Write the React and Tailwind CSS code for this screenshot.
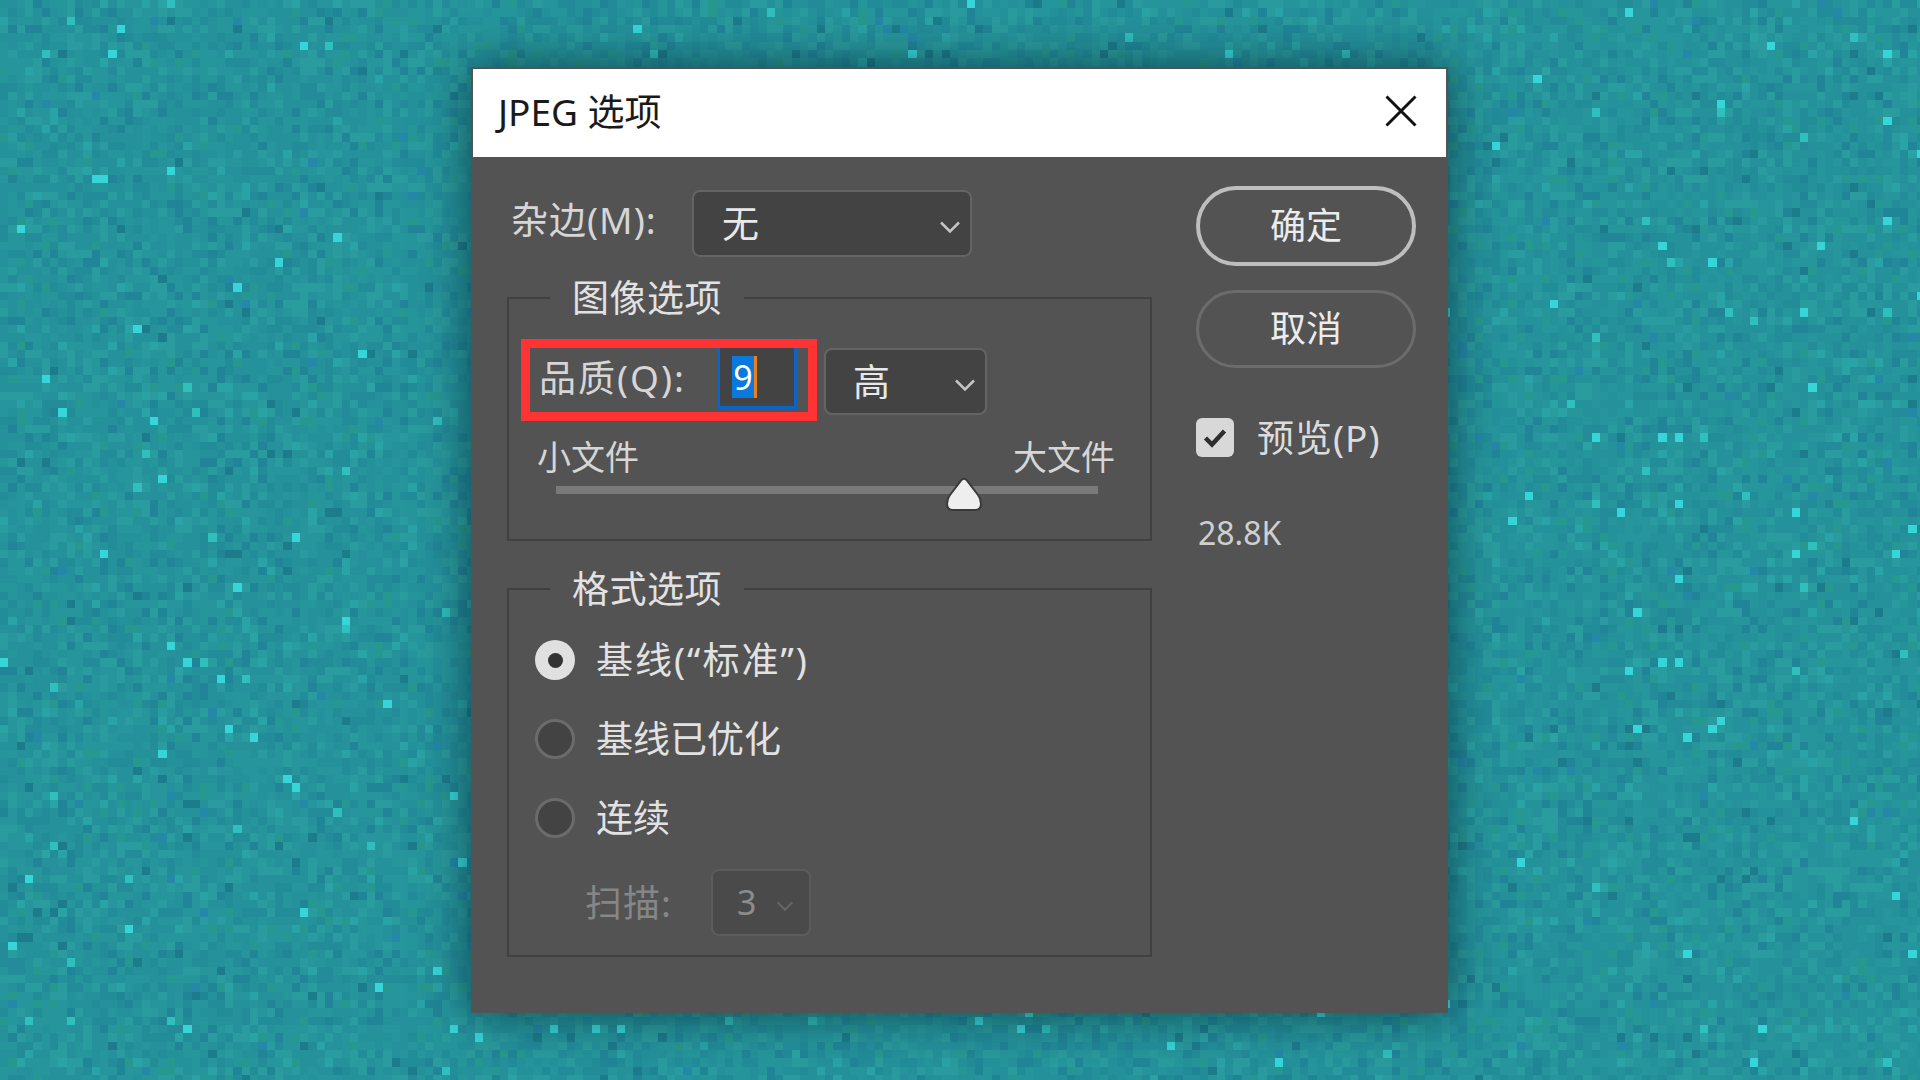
import React from "react";

const font = { fontFamily: '"Noto Sans", "Noto Sans CJK SC", sans-serif' };

// seeded noise so the mosaic stays the same between renders
function buildMosaic() {
  const palette = [
    ["#24919b", 30],
    ["#26969c", 26],
    ["#2a9b9e", 14],
    ["#228c99", 15],
    ["#208697", 6],
    ["#27988f", 3.5],
    ["#2aa3a6", 2.5],
    ["#1c7c8c", 1.2],
    ["#2488a8", 0.5],
    ["#2fbfbc", 0.35],
    ["#36d6d8", 0.55],
  ];
  const total = palette.reduce((s, p) => s + p[1], 0);
  const paths = palette.map(() => "");
  let seed = 12345;
  const rnd = () => {
    seed = (seed * 1664525 + 1013904223) >>> 0;
    return seed / 4294967296;
  };
  for (let y = 0; y < 130; y++) {
    for (let x = 0; x < 231; x++) {
      let r = rnd() * total;
      let i = 0;
      while (r > palette[i][1]) {
        r -= palette[i][1];
        i++;
      }
      paths[i] += `M${x} ${y}h1v1h-1z`;
    }
  }
  return palette.map((p, i) => ({ color: p[0], d: paths[i] }));
}

const mosaic = buildMosaic();

function Chevron({ color = "#c4c4c4", className = "" }) {
  return (
    <svg width="22" height="14" viewBox="0 0 22 14" className={className}>
      <path d="M2 2.5 L11 11.5 L20 2.5" fill="none" stroke={color} strokeWidth="2.5" />
    </svg>
  );
}

function Radio({ checked, label, wide }) {
  return (
    <div className="flex items-center h-[40px] gap-[21px]">
      {checked ? (
        <div className="w-[40px] h-[40px] rounded-full bg-[#e0e0e0] flex items-center justify-center">
          <div className="w-[15px] h-[15px] rounded-full bg-[#333333]" />
        </div>
      ) : (
        <div className="w-[40px] h-[40px] rounded-full bg-[#434343] border-[3px] border-[#6b6b6b]" />
      )}
      <span className={wide ? "text-[37px] leading-[44px] text-[#e2e2e2] whitespace-nowrap tracking-[2px]" : "text-[37px] leading-[44px] text-[#e2e2e2] whitespace-nowrap"}>
        {label}
      </span>
    </div>
  );
}

export default function App() {
  return (
    <div className="relative w-full h-[1080px] overflow-hidden flex items-center justify-center pr-[1px]" style={font}>
      <svg
        className="absolute inset-0 w-[1920px] h-[1080px]"
        viewBox="0 0 230.4 129.6"
        shapeRendering="crispEdges"
      >
        {mosaic.map((m) => (
          <path key={m.color} d={m.d} fill={m.color} />
        ))}
      </svg>

      <div className="relative w-[977px] h-[946px] bg-[#535353] p-[2px] shadow-[0_0_45px_rgba(0,20,30,0.6)]">
        <div className="h-[88px] bg-white flex items-center justify-between pl-[25px] pr-[29px]">
          <span className="text-[37px] text-[#1a1a1a] whitespace-nowrap mb-[3px]">JPEG 选项</span>
          <svg width="32" height="32" viewBox="0 0 32 32" className="mb-[5px]">
            <path d="M1.5 1.5 L30.5 30.5 M30.5 1.5 L1.5 30.5" stroke="#111" strokeWidth="3" />
          </svg>
        </div>

        <div className="flex items-start pl-[34px]">
          {/* left column */}
          <div className="w-[645px] pt-[33px] text-[#d6d6d6]">
            <div className="flex items-center h-[67px]">
              <span className="w-[185px] pl-[4px] mb-[7px] text-[37px] tracking-[1px] whitespace-nowrap">杂边(M):</span>
              <div className="w-[280px] h-[67px] rounded-lg bg-[#434343] border-2 border-[#646464] flex items-center justify-between pl-[28px] pr-[9px]">
                <span className="text-[37px] text-[#e8e8e8]">无</span>
                <Chevron className="mt-[6px]" />
              </div>
            </div>

            <fieldset className="mt-[19px] h-[265px] border-2 border-[#404040]">
              <legend className="ml-[41px] px-[22px] h-[44px] text-[37px] leading-[44px] text-[#e2e2e2] tracking-[0.5px]">图像选项</legend>
              <div className="flex items-start ml-[12px] mt-[19px]">
                <div className="w-[296px] h-[82px] border-[9px] border-[#ff3333] flex items-start pl-[9px] pr-[11px]">
                  <span className="text-[37px] tracking-[2px] leading-[60px] whitespace-nowrap">品质(Q):</span>
                  <div className="ml-auto w-[80px] h-[61px] bg-[#434343] border-x-[3px] border-b-[3px] border-[#0b64c8] pl-[12px] pt-[8px] flex items-start">
                    <span className="h-[42px] w-[22px] bg-[#0a78dc] text-white text-[34px] leading-[42px] text-center">9</span>
                    <span className="h-[42px] w-[3px] bg-[#e8801c]" />
                  </div>
                </div>
                <div className="ml-[7px] mt-[9px] w-[163px] h-[67px] rounded-lg bg-[#434343] border-2 border-[#646464] flex items-center justify-between pl-[27px] pr-[9px]">
                  <span className="text-[37px] text-[#e8e8e8]">高</span>
                  <Chevron className="mt-[6px]" />
                </div>
              </div>
              <div className="flex justify-between ml-[28px] w-[578px] mt-[14px] text-[34px] leading-[44px]">
                <span>小文件</span>
                <span>大文件</span>
              </div>
              <div className="relative ml-[47px] w-[542px] h-[8px] mt-[7px] bg-[#7a7a7a]">
                <svg className="absolute left-[390px] top-[-9px]" width="36" height="36" viewBox="0 0 36 36">
                  <path
                    d="M15.5 3 Q18 0.5 20.5 3 L32 18 Q35 22 35 27 Q35 33 29 33 L7 33 Q1 33 1 27 Q1 22 4 18 Z"
                    fill="#eeeeee"
                    stroke="#3a3a3a"
                    strokeWidth="2"
                  />
                </svg>
              </div>
            </fieldset>

            <fieldset className="mt-[26px] h-[390px] border-2 border-[#404040]">
              <legend className="ml-[41px] px-[22px] h-[44px] text-[37px] leading-[44px] text-[#e2e2e2] tracking-[0.5px]">格式选项</legend>
              <div className="ml-[26px] mt-[29px] flex flex-col gap-[39px]">
                <Radio checked wide label="基线(“标准”)" />
                <Radio label="基线已优化" />
                <Radio label="连续" />
              </div>
              <div className="flex items-center ml-[76px] mt-[31px]">
                <span className="w-[126px] text-[37px] tracking-[1px] text-[#868686] whitespace-nowrap">扫描:</span>
                <div className="w-[100px] h-[67px] rounded-lg bg-[#4a4a4a] border-2 border-[#5c5c5c] flex items-center pl-[24px]">
                  <span className="text-[34px] text-[#8c8c8c]">3</span>
                  <Chevron color="#666666" className="ml-[20px] mt-[6px] w-[18px]" />
                </div>
              </div>
            </fieldset>
          </div>

          {/* right column */}
          <div className="ml-[44px] w-[220px] pt-[29px] flex flex-col text-[#dcdcdc]">
            <div className="h-[80px] rounded-full border-4 border-[#bebebe] flex items-center justify-center text-[36px] text-[#ececec]">
              确定
            </div>
            <div className="mt-[24px] h-[78px] rounded-full border-[3px] border-[#6c6c6c] flex items-center justify-center text-[36px] text-[#ececec]">
              取消
            </div>
            <div className="mt-[50px] h-[39px] flex items-center gap-[23px]">
              <div className="w-[38px] h-[39px] rounded-md bg-[#d8d8d8] flex items-center justify-center">
                <svg width="26" height="22" viewBox="0 0 26 22">
                  <path d="M3.5 11 L10 17.5 L22.5 4" fill="none" stroke="#2e2e2e" strokeWidth="4.5" />
                </svg>
              </div>
              <span className="text-[37px] tracking-[1px] whitespace-nowrap">预览(P)</span>
            </div>
            <div className="mt-[56px] pl-[2px] text-[32px] leading-[40px] text-[#cfcfcf]">28.8K</div>
          </div>
        </div>
      </div>
    </div>
  );
}
